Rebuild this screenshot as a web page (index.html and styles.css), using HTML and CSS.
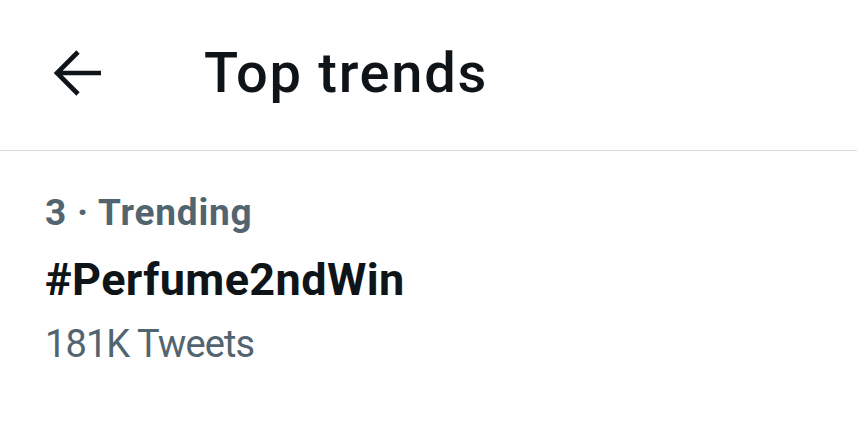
FILE: index.html
```html
<!DOCTYPE html>
<html>
<head>
<meta charset="utf-8">
<link rel="stylesheet" href="styles.css">
</head>
<body>
<header class="header">
  <button class="back" aria-label="Back">
    <svg width="50" height="48" viewBox="0 0 50 48"><path d="M4 24H48M25 3L4 24L25 45" fill="none" stroke="#0f1419" stroke-width="4.6"/></svg>
  </button>
  <h1 class="title">Top trends</h1>
</header>
<section class="trend">
  <div class="meta">3 · Trending</div>
  <div class="name">#Perfume2ndWin</div>
  <div class="count">181K Tweets</div>
</section>
</body>
</html>
```
FILE: styles.css
```css
html, body {
  margin: 0;
  padding: 0;
  background: #ffffff;
  font-family: Roboto, "Liberation Sans", sans-serif;
}
.header {
  height: 151px;
  display: flex;
  align-items: center;
  border-bottom: 1px solid #d3d9dc;
  box-sizing: border-box;
  padding-left: 53px;
  padding-bottom: 5px;
}
.back {
  border: 0;
  background: none;
  padding: 0;
  width: 50px;
  height: 48px;
  display: flex;
}
.title {
  margin: 0 0 0 101px;
  font-size: 56px;
  font-weight: 500;
  color: #0f1419;
  letter-spacing: 1.7px;
}
.trend {
  padding: 37px 0 0 45px;
  display: flex;
  flex-direction: column;
}
.meta {
  font-size: 37px;
  font-weight: 700;
  color: #536471;
  line-height: 50px;
  letter-spacing: 0.8px;
}
.name {
  font-size: 45px;
  font-weight: 700;
  color: #0f1419;
  line-height: 84px;
  letter-spacing: 0.4px;
}
.count {
  font-size: 38px;
  color: #536471;
  line-height: 44px;
  letter-spacing: -0.9px;
}
```
